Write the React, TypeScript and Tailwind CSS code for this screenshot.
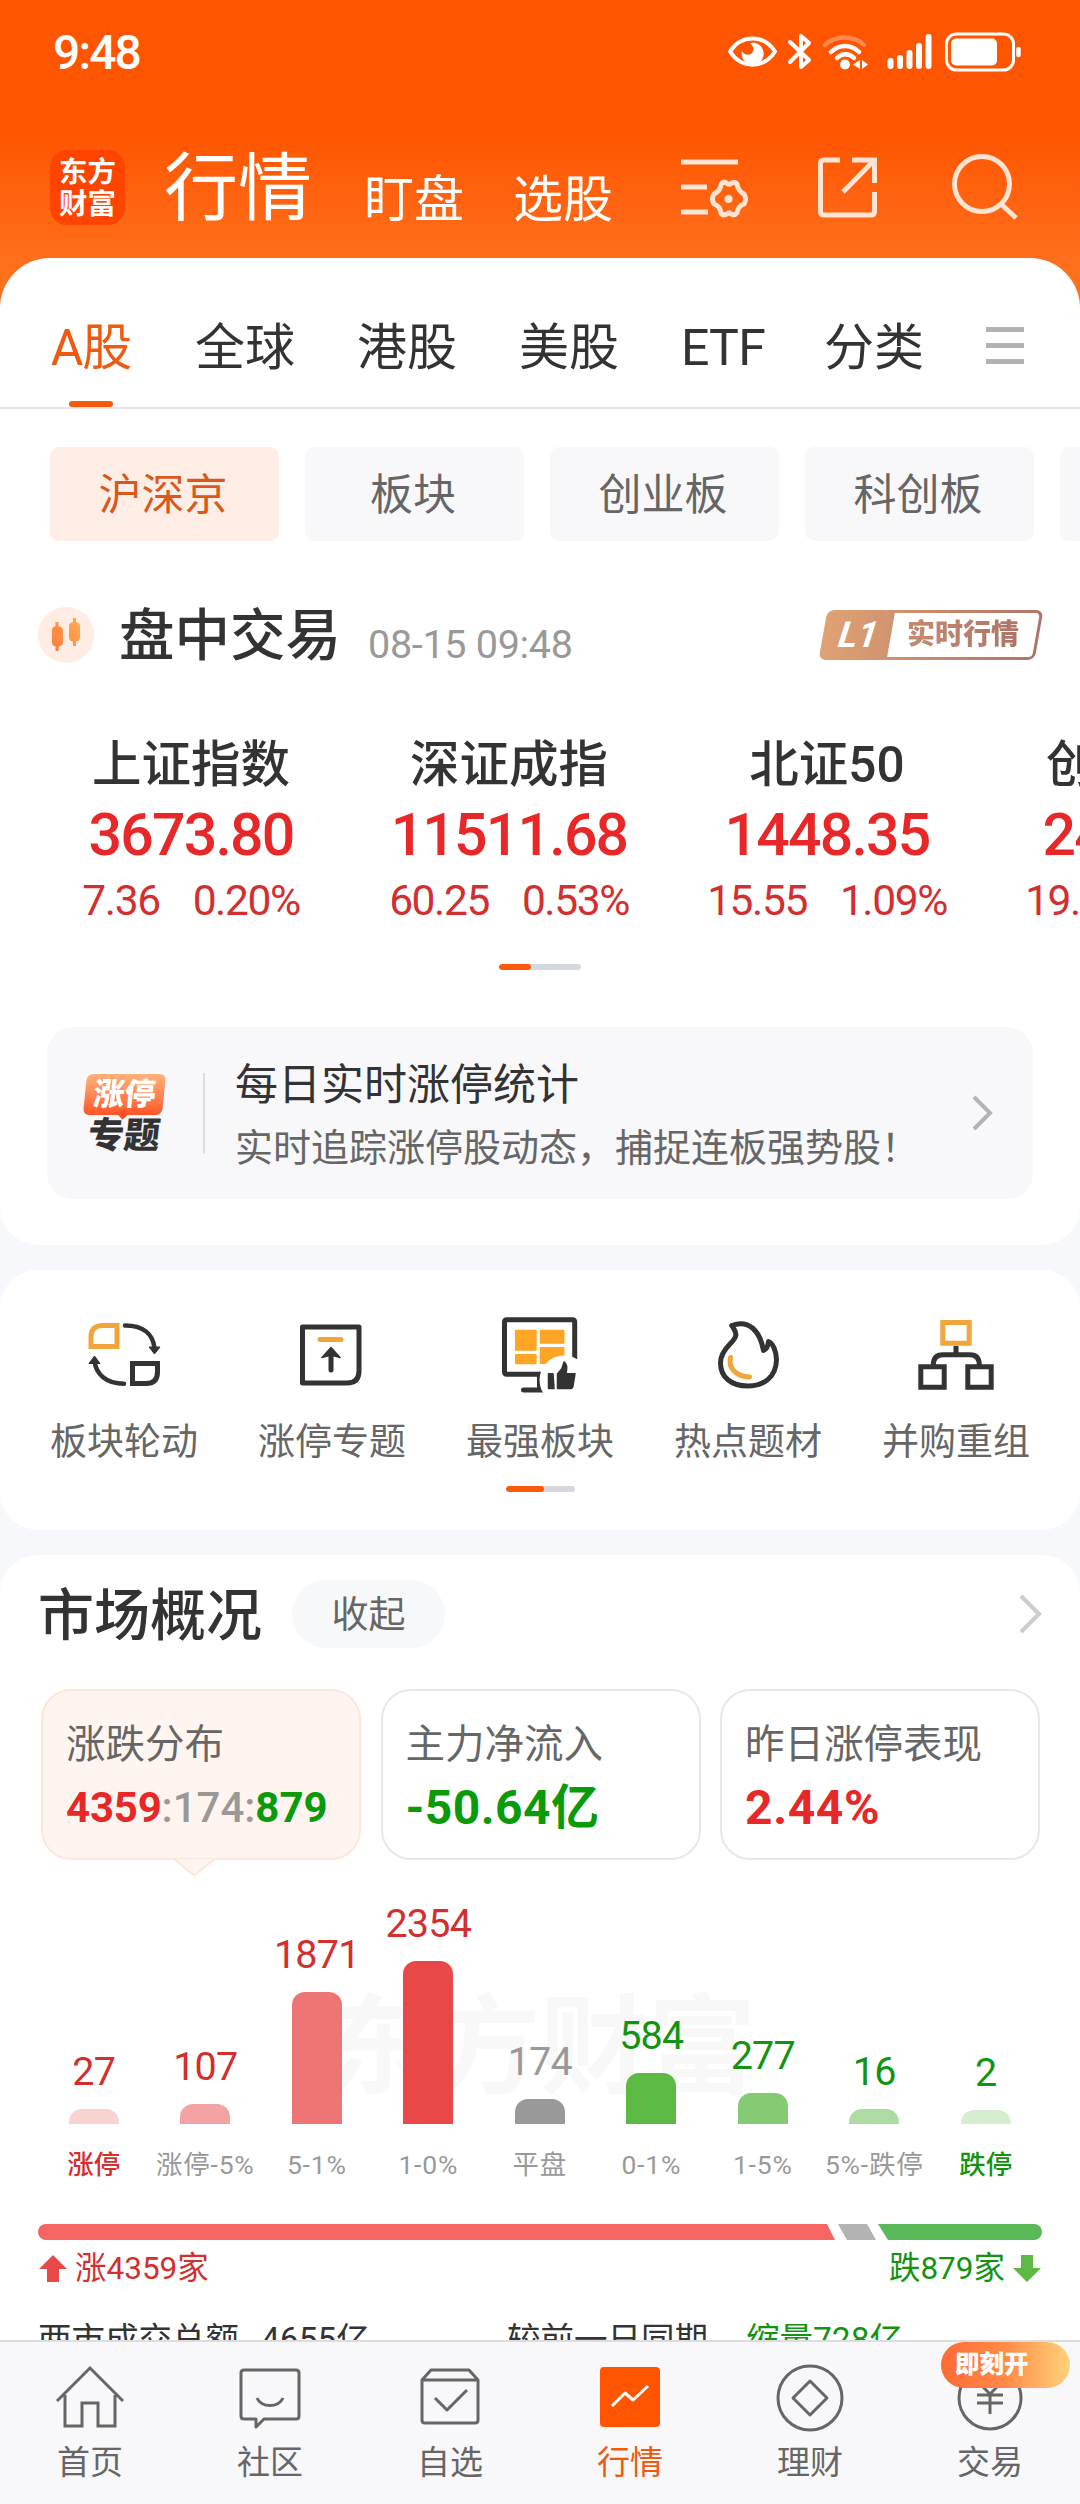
import type { ReactNode } from 'react';
import { clsx } from 'clsx';

const tabs = ['全球', '港股', '美股', 'ETF', '分类'];

const indices = [
  { name: '上证指数', value: '3673.80', change: '7.36', percent: '0.20%' },
  { name: '深证成指', value: '11511.68', change: '60.25', percent: '0.53%' },
  { name: '北证50', value: '1448.35', change: '15.55', percent: '1.09%' },
  { name: '创业板指', value: '2469.57', change: '19.51', percent: '0.80%' },
];

const distribution = [
  { count: 27, label: '涨停', height: 15, bar: 'bg-[#f9d2d2]', text: 'text-[#d22f2f]', strong: true },
  { count: 107, label: '涨停-5%', height: 20, bar: 'bg-[#f4a3a4]', text: 'text-[#d22f2f]' },
  { count: 1871, label: '5-1%', height: 132, bar: 'bg-[#ee7576]', text: 'text-[#d22f2f]' },
  { count: 2354, label: '1-0%', height: 163, bar: 'bg-[#e84848]', text: 'text-[#d22f2f]' },
  { count: 174, label: '平盘', height: 25, bar: 'bg-[#999999]', text: 'text-[#999999]' },
  { count: 584, label: '0-1%', height: 51, bar: 'bg-[#5cb944]', text: 'text-[#129412]' },
  { count: 277, label: '1-5%', height: 31, bar: 'bg-[#84cb74]', text: 'text-[#129412]' },
  { count: 16, label: '5%-跌停', height: 15, bar: 'bg-[#acdca1]', text: 'text-[#129412]' },
  { count: 2, label: '跌停', height: 14, bar: 'bg-[#d5eed0]', text: 'text-[#129412]', strong: true },
];

function StatusBar() {
  return (
    <div className="flex h-[106px] items-center justify-between pl-[53px] pr-[58px] text-white">
      <span className="text-[48px] font-medium leading-none tracking-[-1.9px]">9:48</span>
      <svg width="296" height="44" viewBox="0 0 296 44" fill="none" stroke="currentColor" strokeLinecap="round">
        <path d="M4 20.500C15 3 38 3 49 20.500C38 38 15 38 4 20.500Z" strokeWidth="4" strokeLinejoin="round" />
        <path d="M24 12A11 11 0 1 1 16 20C18 25 26 25 27 20C28 16 26 14 24 12Z" fill="currentColor" stroke="none" />
        <path d="M64 11L83 29L75 36V5L83 12L64 31" strokeWidth="4" strokeLinejoin="round" />
        <path d="M99 14C109 4 128 4 138 14" strokeWidth="4.500" opacity=".3" />
        <path d="M105 21C113 13 125 13 133 21M111 27C116 22 123 22 128 27" strokeWidth="4.500" />
        <circle cx="119" cy="33.500" r="5" fill="currentColor" stroke="none" />
        <path d="M134 29V38L127 33.500ZM136 29L142 33.500L136 38Z" fill="currentColor" stroke="none" />
        <path d="M164.500 30V35M174 27V35M183.500 22V35M193 15V35M202.500 6V35" strokeWidth="6" />
        <rect x="220.500" y="3" width="67" height="36" rx="10" strokeWidth="3" />
        <rect x="225" y="7.500" width="46" height="27" rx="5" fill="currentColor" stroke="none" />
        <path d="M292.500 18V24" strokeWidth="4.500" />
      </svg>
    </div>
  );
}

function TitleBar() {
  return (
    <div className="flex h-[152px] items-start pl-[50px] text-white">
      <div className="mt-[44px] flex h-[75px] w-[75px] flex-col items-center justify-center rounded-[17px] bg-[#ff4400] pt-[2px] text-[28.5px] font-bold leading-[32px]">
        <span>东方</span>
        <span>财富</span>
      </div>
      <h1 className="ml-[39px] mt-[46px] text-[74px] leading-none">行情</h1>
      <span className="ml-[52px] mt-[69px] text-[50px] leading-none">盯盘</span>
      <span className="ml-[49px] mt-[69px] text-[50px] leading-none">选股</span>
      <svg className="ml-[65px] mt-[46px]" width="350" height="74" fill="none" stroke="#ffe4d3" strokeWidth="5">
        <path d="M3 10H60M3 35H29M3 60H30" />
        <path
          d="M44 31Q46 29 49 31.500Q51 33 53 31.500Q56 29 59 32Q60 39 66 42Q69 47 66 52Q60 54 59 61Q56 64 53 62Q51 60 49 62Q45 64 43 61Q42 54 36 52Q33 47 36 42Q42 39 43 33Z"
          strokeLinejoin="round"
        />
        <circle cx="50.500" cy="47" r="4" fill="#ffe4d3" stroke="none" />
        <path d="M162 8H146Q142.500 8 142.500 11.500V59.500Q142.500 63 146 63H193Q196.500 63 196.500 59.500V40M174 8H196.500V31M196 8.500L165 40" />
        <circle cx="304" cy="32" r="27.500" />
        <path d="M323 52L338 66" />
      </svg>
    </div>
  );
}

function MarketTabs() {
  return (
    <div className="flex h-[151px] border-b-2 border-[#e5e5e5] pl-[50px] text-[50px] text-[#333333]">
      <div className="flex w-[82px] flex-col items-center justify-between pt-[65px] text-[#ee5a10]">
        <span className="leading-none tracking-[-1px]">A股</span>
        <div className="h-[6px] w-[44px] rounded-full bg-[#f65a09]" />
      </div>
      <div className="ml-[63px] mt-[65px] flex gap-[62px] leading-none">
        {tabs.map((tab) => (
          <span key={tab} className={clsx(tab === 'ETF' && 'mr-[-3px] tracking-[-0.8px]')}>
            {tab}
          </span>
        ))}
      </div>
      <svg className="ml-[62px] mt-[69px]" width="38" height="38" stroke="#b2b2b2" strokeWidth="5">
        <path d="M0 2.500H38M0 18.500H38M0 34.500H38" />
      </svg>
    </div>
  );
}

function Chip({ active, className, children }: { active?: boolean; className: string; children?: ReactNode }) {
  return (
    <div
      className={clsx(
        'flex h-[94px] shrink-0 items-center justify-center rounded-[9px] pr-[3px] pt-[3px] text-[43px] leading-none',
        active ? 'bg-[#ffeee6] text-[#d8591b]' : 'bg-[#f8f8fa] text-[#666666]',
        className
      )}
    >
      {children}
    </div>
  );
}

function SessionRow() {
  return (
    <div className="flex h-[56px] items-center pl-[38px] pr-[41px]">
      <svg width="56" height="56" viewBox="0 0 56 56">
        <defs>
          <linearGradient id="candle" x1="0" y1="1" x2="1" y2="0">
            <stop offset="0" stopColor="#ff7a3c" />
            <stop offset="1" stopColor="#ffae55" />
          </linearGradient>
        </defs>
        <circle cx="28" cy="28" r="28" fill="#ffece2" />
        <path
          d="M17.500 15H20.500V19Q25 20 25 23V35Q25 39 20.500 39.500V44H17.500V39.500Q14 39 14 35V23Q14 20 17.500 19ZM35 11H38V15Q42 16 42 19V30Q42 34 38 34.500V39H35V34.500Q31 34 31 30V19Q31 16 35 15Z"
          fill="url(#candle)"
        />
      </svg>
      <div className="ml-[25px] mt-[4px] flex items-end">
        <h2 className="text-[55.5px] font-medium leading-none text-[#333333]">盘中交易</h2>
        <span className="ml-[27px] text-[39.5px] leading-none tracking-[-0.3px] text-[#999999]">08-15 09:48</span>
      </div>
      <div className="ml-auto flex h-[50px] w-[216px] -skew-x-[10deg] items-center rounded-[7px] bg-gradient-to-r from-[#e0a273] to-[#ad7567] p-[3px]">
        <span className="w-[65px] skew-x-[2deg] text-center text-[36px] font-bold italic leading-none text-white">L1</span>
        <div className="flex h-full flex-1 items-center justify-center rounded-r-[4px] bg-white">
          <span className="skew-x-[10deg] bg-gradient-to-r from-[#c58a70] to-[#ad7567] bg-clip-text text-[28px] font-black leading-[34px] text-transparent">
            实时行情
          </span>
        </div>
      </div>
    </div>
  );
}

function IndexList() {
  return (
    <div className="flex w-[1304px] pl-[32px]">
      {indices.map((item) => (
        <div key={item.name} className="flex w-[318px] flex-col items-center leading-none">
          <span className="text-[49.5px] font-medium text-[#333333]">{item.name}</span>
          <span className="mt-[14px] text-[59px] font-medium tracking-[-1.8px] text-[#e82828]">{item.value}</span>
          <div className="mt-[16px] flex gap-[33px] text-[42.5px] tracking-[-1.4px] text-[#d23030]">
            <span>{item.change}</span>
            <span>{item.percent}</span>
          </div>
        </div>
      ))}
    </div>
  );
}

function Banner() {
  return (
    <div className="mx-[47px] flex h-[172px] items-center rounded-[26px] bg-[#f8f8fb]">
      <div className="ml-[35px] flex w-[84px] flex-col items-center">
        <div className="relative flex h-[41px] w-[79px] -skew-x-[6deg] items-center justify-center rounded-[6px] bg-gradient-to-b from-[#ffb27c] to-[#ff5326] text-[31px] font-black leading-none text-white">
          涨停
          <div className="absolute -bottom-[3px] left-[36px] h-[8px] w-[8px] rotate-45 bg-[#ff5326]" />
        </div>
        <span className="mt-[4px] -skew-x-[6deg] text-[36px] font-black leading-[34px] text-[#333333]">专题</span>
      </div>
      <div className="ml-[37px] h-[81px] w-[2px] bg-[#dedee0]" />
      <div className="ml-[30px] mt-[5px] flex flex-col leading-none">
        <span className="text-[43px] text-[#333333]">每日实时涨停统计</span>
        <span className="mt-[22px] text-[38px] text-[#666666]">实时追踪涨停股动态，捕捉连板强势股！</span>
      </div>
      <svg className="ml-[53px]" width="22" height="36" fill="none" stroke="#b3b3b3" strokeWidth="4">
        <path d="M2 2L18 18L2 34" />
      </svg>
    </div>
  );
}

function Pager({ className, active }: { className: string; active: string }) {
  return (
    <div className={clsx('h-[6px] overflow-hidden rounded-full bg-[#d5d8dc]', className)}>
      <div className={clsx('h-full rounded-full bg-[#fa5a0a]', active)} />
    </div>
  );
}

function Shortcut({ label, children }: { label: string; children: ReactNode }) {
  return (
    <div className="flex w-[208px] flex-col items-center">
      <svg width="90" height="90" viewBox="0 0 90 90" fill="none" stroke="#333333" strokeWidth="5">
        {children}
      </svg>
      <span className="mt-[24px] text-[37px] leading-none text-[#666666]">{label}</span>
    </div>
  );
}

function Shortcuts() {
  return (
    <div className="flex flex-col items-center">
      <div className="flex">
        <Shortcut label="板块轮动">
          <path d="M12 36.500V27Q12 15.500 24 15.500H38V36.500Z" stroke="#f2a53a" />
          <path d="M53.500 53.500H78.500V62Q78.500 73.500 67 73.500H53.500Z" />
          <path d="M46 15.500C64 15.500 74 24 75.500 38M45 73.700C27 73.700 17 64 15.500 51" strokeLinecap="round" strokeWidth="4.500" />
          <path d="M70 37H81L75.500 44ZM10 53.500H21L15.500 46Z" fill="#333333" strokeWidth="1" strokeLinejoin="round" />
        </Shortcut>
        <Shortcut label="涨停专题">
          <path d="M15.500 17H72V61Q72 73 60 73H15.500Z" strokeLinejoin="round" />
          <path d="M33 29.500H54" stroke="#f2a53a" strokeLinecap="round" />
          <path d="M44 60V44" strokeLinecap="round" />
          <path d="M35 47.500L44 37.500L53 47.500L44 45Z" fill="#333333" strokeWidth="1.500" strokeLinejoin="round" />
        </Shortcut>
        <Shortcut label="最强板块">
          <g transform="translate(2 0)">
            <path d="M42 64.300H10Q7.500 64.300 7.500 62V12Q7.500 9.700 10 9.700H75.500Q77.700 9.700 77.700 12V49M42.500 64V80M26.500 80H48" strokeLinecap="round" />
            <path
              d="M19 20.700H38.700V39.700H19ZM43.700 20.700H66.500V32.700H43.700ZM19 45H38.700V53.300H19ZM43.700 38H66.500V53H43.700Z"
              fill="#ffa526"
              stroke="#ffa526"
              strokeWidth="2"
              strokeLinejoin="round"
            />
            <circle cx="67" cy="70" r="24.500" fill="#ffffff" stroke="none" />
            <path
              d="M51.500 63.700H56L57 78.500H51.500ZM60.500 64L65 58.500L67 52Q71 54 69 63.700H78L76 76Q75.500 78.500 73 78.500H60.500Z"
              fill="#333333"
              strokeWidth="1.500"
              strokeLinejoin="round"
            />
          </g>
        </Shortcut>
        <Shortcut label="热点题材">
          <path
            d="M28.700 15.500C46 9 57 21 60.500 40.500C63.500 39.500 65 36 65.500 31.500C70 33 73.500 42 73.500 50C73 66 62 76 45 76C28 76 17.500 67 17.500 53C17.500 46 21 40 27 34C34 27 35 24 28.700 15.500Z"
            strokeLinejoin="round"
          />
          <path d="M27.500 47.500C25 58 33 66.500 46.500 67" stroke="#f2a53a" strokeLinecap="round" />
        </Shortcut>
        <Shortcut label="并购重组">
          <path d="M31.800 12.500H58.200V33.200H31.800Z" stroke="#f2a53a" />
          <path d="M45 36V44.700M22.300 55Q22.300 44.700 32 44.700H59Q68.300 44.700 68.300 55M9.800 56.800H33.200V77.200H9.800ZM56.800 56.800H80.200V77.200H56.800Z" />
        </Shortcut>
      </div>
      <Pager className="mt-[25px] w-[69px]" active="w-[38px]" />
    </div>
  );
}

function StatCard({ label, className, children }: { label: string; className?: string; children: ReactNode }) {
  return (
    <div className={clsx('h-[171px] w-[320px] rounded-[30px] border-2 px-[23px] pt-[34px]', className ?? 'border-[#e8e8e8]')}>
      <div className="text-[39.5px] leading-none text-[#666666]">{label}</div>
      <div className="mt-[17px] flex h-[52px] items-center whitespace-nowrap text-[48px] font-bold leading-none">{children}</div>
    </div>
  );
}

function Overview() {
  return (
    <>
      <div className="flex h-[68px] items-center pl-[38px] pr-[36px]">
        <h2 className="mt-[4px] text-[56px] font-medium leading-none text-[#333333]">市场概况</h2>
        <div className="ml-[30px] flex h-[68px] w-[153px] items-center justify-center rounded-full bg-[#f7f8fa] pt-[2px] text-[37px] leading-none text-[#666666]">
          收起
        </div>
        <svg className="ml-auto" width="26" height="40" fill="none" stroke="#cccccc" strokeWidth="4">
          <path d="M3 2L21 20L3 38" />
        </svg>
      </div>
      <div className="mt-[41px] flex justify-between pl-[41px] pr-[40px]">
        <StatCard label="涨跌分布" className="relative border-[#fde6db] bg-[#fff5f0]">
          <span className="text-[42px] tracking-[-0.2px] text-[#e82828]">4359</span>
          <span className="text-[42px] font-medium text-[#999999]">:174:</span>
          <span className="text-[42px] text-[#0a9a0a]">879</span>
          <svg className="absolute left-[131px] top-[165px]" width="42" height="20" fill="#fff5f0" stroke="#fde6db" strokeWidth="2">
            <path d="M0 3L17 17Q20 20 23 17L41 3" />
          </svg>
        </StatCard>
        <StatCard label="主力净流入">
          <span className="tracking-[0.4px] text-[#0a9a0a]">-50.64亿</span>
        </StatCard>
        <StatCard label="昨日涨停表现">
          <span className="tracking-[0.6px] text-[#e82828]">2.44%</span>
        </StatCard>
      </div>
    </>
  );
}

function Distribution() {
  return (
    <div className="relative flex h-[318px] items-end px-[38px]">
      <span className="absolute left-[324px] top-[134px] text-[108px] font-bold leading-none text-[#f8f8f8]">东方财富</span>
      {distribution.map((item) => (
        <div key={item.label} className="relative flex w-[111.5px] flex-col items-center whitespace-nowrap leading-none">
          <span className={clsx('text-[39.5px] tracking-[-0.8px]', item.text)}>{item.count}</span>
          <div className={clsx('mt-[17px] w-[50px] rounded-t-[13px]', item.bar)} style={{ height: item.height }} />
          <span
            className={clsx(
              'mt-[28px] text-[26.5px]',
              item.strong ? ['font-medium', item.text] : 'tracking-[0.8px] text-[#999999]'
            )}
          >
            {item.label}
          </span>
        </div>
      ))}
    </div>
  );
}

function Balance() {
  return (
    <div className="mx-[38px]">
      <svg width="1004" height="16" viewBox="0 0 1004 16">
        <path d="M8 0H789L797 16H8A8 8 0 0 1 8 0Z" fill="#f76464" />
        <path d="M800 0H829L838 16H809Z" fill="#b3b3b3" />
        <path d="M840 0H996A8 8 0 0 1 996 16H850Z" fill="#5aba5a" />
      </svg>
      <div className="mt-[13px] flex items-center text-[31.5px] leading-none">
        <svg width="30" height="30" fill="#e84848">
          <path d="M15 1L29 15H21V28H9V15H1Z" />
        </svg>
        <span className="ml-[7px] text-[#d22f2f]">涨4359家</span>
        <span className="ml-auto mr-[7px] text-[#129412]">跌879家</span>
        <svg width="30" height="30" fill="#5cb944">
          <path d="M15 28L29 14H21V1H9V14H1Z" />
        </svg>
      </div>
      <div className="mt-[38px] flex text-[33.5px] leading-none text-[#333333]">
        <span className="w-[223px]">两市成交总额</span>
        <span className="w-[246px]">4655亿</span>
        <span className="w-[239px]">较前一日同期</span>
        <span className="text-[#129412]">缩量728亿</span>
      </div>
    </div>
  );
}

function NavItem({ label, active, badge, children }: { label: string; active?: boolean; badge?: string; children: ReactNode }) {
  return (
    <div className={clsx('relative flex w-[180px] flex-col items-center pt-[20px]', active ? 'text-[#ee5a10]' : 'text-[#666666]')}>
      <svg width="72" height="72" viewBox="0 0 72 72" fill="none" stroke="currentColor" strokeWidth="3">
        {children}
      </svg>
      <span className="mt-[12px] text-[33px] leading-none">{label}</span>
      {badge && (
        <div className="absolute left-[41px] top-0 flex h-[46px] w-[129px] items-center rounded-full bg-gradient-to-r from-[#ff6a35] via-[#ff8b48] to-[#ffd27a] pl-[14px] text-[24.5px] font-black leading-none text-white">
          {badge}
        </div>
      )}
    </div>
  );
}

function BottomNav() {
  return (
    <nav className="relative flex h-[164px] shrink-0 border-t-2 border-[#dddde0] bg-[#f8f8fb]">
      <NavItem label="首页">
        <path d="M3 39L36 6L69 39M11 33V64H28V41H44V64H61V33" />
      </NavItem>
      <NavItem label="社区">
        <path d="M10 8H62Q65 8 65 11V54Q65 57 62 57H30L22 65V57H10Q7 57 7 54V11Q7 8 10 8Z" strokeLinejoin="round" />
        <path d="M23 36C27 46 45 46 49 36" />
      </NavItem>
      <NavItem label="自选">
        <path d="M8 18L17 8H55L64 18V58Q64 61 61 61H11Q8 61 8 58ZM8 18H64M21 36L33 48L53 28" strokeLinejoin="round" />
      </NavItem>
      <NavItem label="行情" active>
        <rect x="6" y="5" width="60" height="60" rx="4" fill="#ff5500" stroke="none" />
        <path d="M18 44L31 31L39 38L54 24" stroke="#ffffff" strokeLinejoin="round" />
      </NavItem>
      <NavItem label="理财">
        <circle cx="36" cy="36" r="32" />
        <path d="M36 19L53 36L36 53L19 36Z" strokeLinejoin="round" />
      </NavItem>
      <NavItem label="交易" badge="即刻开">
        <circle cx="36" cy="36" r="31" />
        <path d="M24 20L36 32L48 20M36 32V52M23 33H49M23 41H49" />
      </NavItem>
    </nav>
  );
}

export default function App() {
  return (
    <div className="flex h-[2504px] w-[1080px] flex-col overflow-hidden bg-[#f7f8fb] font-['Roboto','Noto_Sans_CJK_SC',sans-serif]">
      <header className="h-[306px] shrink-0 bg-gradient-to-b from-[#ff5500] from-[43%] to-[#ff701c] to-[88%]">
        <StatusBar />
        <TitleBar />
      </header>

      <main className="min-h-0 flex-1">
        <section className="relative -mt-[48px] h-[987px] overflow-hidden rounded-b-[38px] rounded-t-[50px] bg-white">
          <MarketTabs />
          <div className="mt-[38px] flex gap-[26px] pl-[50px]">
            <Chip active className="w-[229px]">沪深京</Chip>
            <Chip className="w-[219px]">板块</Chip>
            <Chip className="w-[229px]">创业板</Chip>
            <Chip className="w-[229px]">科创板</Chip>
            <Chip className="w-[229px]" />
          </div>
          <div className="mt-[66px]">
            <SessionRow />
          </div>
          <div className="mt-[78px]">
            <IndexList />
          </div>
          <Pager className="mx-auto mt-[42px] w-[82px]" active="w-[32px]" />
          <div className="mt-[57px]">
            <Banner />
          </div>
        </section>

        <section className="mt-[25px] h-[260px] rounded-[38px] bg-white pt-[40px]">
          <Shortcuts />
        </section>

        <section className="mt-[25px] rounded-t-[38px] bg-white pt-[25px]">
          <Overview />
          <Distribution />
          <div className="mt-[46px]">
            <Balance />
          </div>
        </section>
      </main>

      <BottomNav />
    </div>
  );
}
